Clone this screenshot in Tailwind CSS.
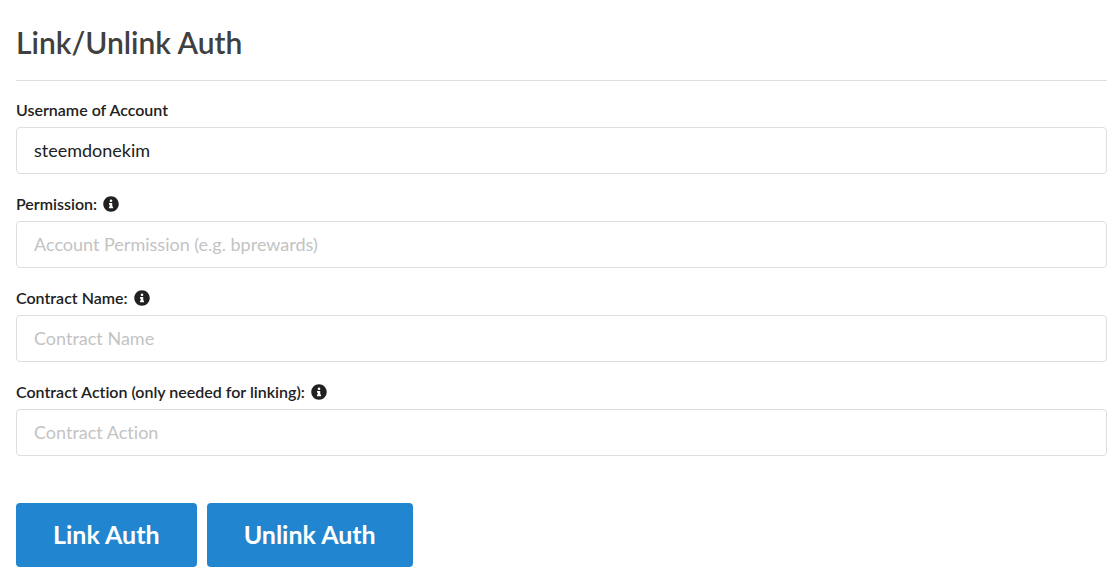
<!DOCTYPE html>
<html lang="en">
<head>
    <meta charset="UTF-8">
    <meta name="viewport" content="width=device-width, initial-scale=1.0">
    <title>Link/Unlink Auth</title>
    <script src="https://cdn.jsdelivr.net/npm/@tailwindcss/browser@4"></script>
</head>
<body class="bg-white font-['Lato',sans-serif] text-[#212121] [font-variant-ligatures:none]">
    <svg class="hidden">
        <symbol id="info" viewBox="0 0 512 512">
            <path fill="currentColor" d="M256 8C119 8 8 119 8 256c0 137 111 248 248 248s248-111 248-248C504 119 393 8 256 8zm0 102c23 0 42 19 42 42s-19 42-42 42-42-19-42-42 19-42 42-42zm64 270c0 7-5 12-12 12H204c-7 0-12-5-12-12v-32c0-7 5-12 12-12h12v-56h-12c-7 0-12-5-12-12v-32c0-7 5-12 12-12h80c7 0 12 5 12 12v100h12c7 0 12 5 12 12v32z"/>
        </symbol>
    </svg>
    <main class="pt-[22px] pr-3 pb-3 pl-4">
        <h1 class="border-b border-[#dededf] pb-[18px] text-[30px] leading-10 font-semibold text-[#404040]">Link/Unlink Auth</h1>
        <form class="pt-[19px]">
            <div class="mb-5">
                <label for="username" class="mb-[7px] flex items-center gap-[6px] text-base leading-5 font-semibold">Username of Account</label>
                <input id="username" type="text" value="steemdonekim" class="block h-[47px] w-full rounded border border-[#dededf] px-[17px] pb-[2px] text-lg outline-none">
            </div>
            <div class="mb-5">
                <label for="permission" class="mb-[7px] flex items-center gap-[6px] text-base leading-5 font-semibold">Permission: <svg class="size-4"><use href="#info"/></svg></label>
                <input id="permission" type="text" placeholder="Account Permission (e.g. bprewards)" class="block h-[47px] w-full rounded border border-[#dededf] px-[17px] pb-[2px] text-lg outline-none placeholder:text-[#c3c3c3]">
            </div>
            <div class="mb-5">
                <label for="contract" class="mb-[7px] flex items-center gap-[6px] text-base leading-5 font-semibold">Contract Name: <svg class="size-4"><use href="#info"/></svg></label>
                <input id="contract" type="text" placeholder="Contract Name" class="block h-[47px] w-full rounded border border-[#dededf] px-[17px] pb-[2px] text-lg outline-none placeholder:text-[#c3c3c3]">
            </div>
            <div class="mb-[47px]">
                <label for="action" class="mb-[7px] flex items-center gap-[6px] text-base leading-5 font-semibold">Contract Action (only needed for linking): <svg class="size-4"><use href="#info"/></svg></label>
                <input id="action" type="text" placeholder="Contract Action" class="block h-[47px] w-full rounded border border-[#dededf] px-[17px] pb-[2px] text-lg outline-none placeholder:text-[#c3c3c3]">
            </div>
            <div class="flex gap-[10px]">
                <button type="button" class="h-16 rounded bg-[#2185d0] px-[37px] text-[25px] font-bold text-white">Link Auth</button>
                <button type="button" class="h-16 rounded bg-[#2185d0] px-[37px] text-[25px] font-bold text-white">Unlink Auth</button>
            </div>
        </form>
    </main>
</body>
</html>
